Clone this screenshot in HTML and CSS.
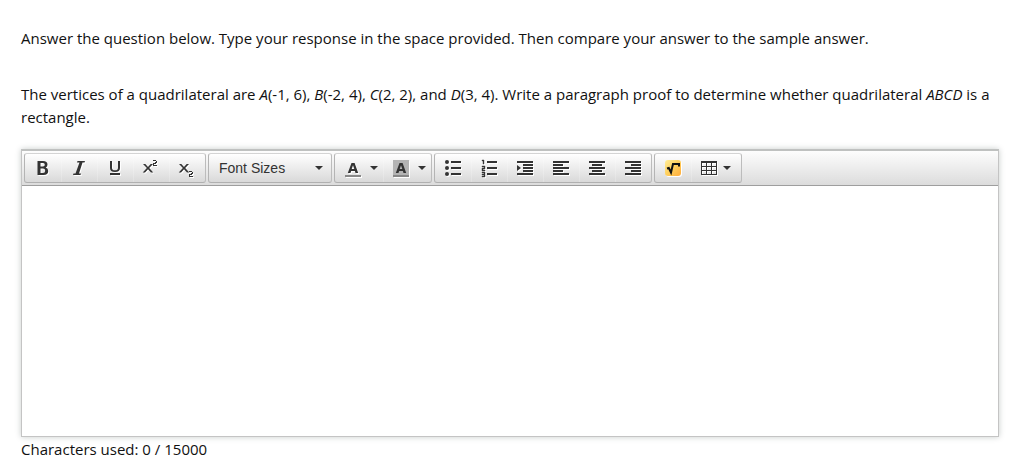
FILE: index.html
```html
<!DOCTYPE html>
<html lang="en">
<head>
<meta charset="utf-8">
<title>Paragraph proof</title>
<link rel="stylesheet" href="styles.css">
</head>
<body>
<main class="question">
  <p class="instructions">Answer the question below. Type your response in the space provided. Then compare your answer to the sample answer.</p>
  <p class="prompt" id="prompt">The vertices of a quadrilateral are <i>A</i>(-1, 6), <i>B</i>(-2, 4), <i>C</i>(2, 2), and <i>D</i>(3, 4). Write a paragraph proof to determine whether quadrilateral <i>ABCD</i> is a rectangle.</p>
  <div class="editor">
    <div class="toolbar" role="toolbar" aria-label="Formatting">
      <div class="group">
        <button class="tool" type="button" aria-label="Bold"><svg class="icon" viewBox="0 0 16 16"><path fill-rule="evenodd" d="M2.500 1H8q4.500 0 4.500 3.500Q12.500 6.800 10.700 7.500 13.200 8.300 13.200 11 13.200 15 8.500 15h-6zM5.500 3v3.600H8Q9.800 6.600 9.800 4.800 9.800 3 8 3zM5.500 8.600V13H8Q10.200 13 10.200 10.800 10.200 8.600 8 8.600z"/></svg></button>
        <button class="tool" type="button" aria-label="Italic"><svg class="icon" viewBox="0 0 16 16"><path d="M6.500 1H14l-.5 1.500h-2L8 13.500h2L9.500 15H2l.5-1.500h2L8.500 2.500H6z"/></svg></button>
        <button class="tool" type="button" aria-label="Underline"><svg class="icon" viewBox="0 0 16 16"><path d="M3 1h2v7q0 2.300 3 2.300T11 8V1h2v7q0 4-5 4T3 8zM3 13h10v2H3z"/></svg></button>
        <button class="tool" type="button" aria-label="Superscript"><svg class="icon" viewBox="0 0 16 16"><path d="M0 4h2.300L5 6.900 7.700 4H10L6.200 8.100 10.300 12.500H8L5 9.300l-3 3.200H-.3L3.900 8.100zM10 0h3v1h1v2h-1v1h-2v1h3v1h-4V3h2V2h1V1h-3z"/></svg></button>
        <button class="tool" type="button" aria-label="Subscript"><svg class="icon" viewBox="0 0 16 16"><path d="M0 4h2.300L5 6.900 7.700 4H10L6.200 8.100 10.300 12.500H8L5 9.300l-3 3.200H-.3L3.900 8.100zM10 11h3v1h1v2h-1v1h-2v1h3v1h-4v-3h2v-1h1v-1h-3z"/></svg></button>
      </div>
      <div class="group">
        <button class="tool sizes" type="button" aria-haspopup="listbox"><span>Font Sizes</span><span class="caret"></span></button>
      </div>
      <div class="group">
        <button class="tool colour" type="button" aria-label="Text color"><svg class="icon" viewBox="0 0 16 16"><path class="swatch" d="M0 15h16v2H0z"/><path fill-rule="evenodd" d="M6.500 3h3.100L13.200 13h-2.700L9.900 11H6.100L5.500 13H2.800zM6.700 9h2.600L8 5.200z"/></svg><span class="caret"></span></button>
        <button class="tool colour" type="button" aria-label="Background color"><svg class="icon" viewBox="0 0 16 16"><path class="fill" d="M0 0h16v16H0z"/><path class="swatch" d="M0 15h16v2H0z"/><path fill-rule="evenodd" d="M6.500 3h3.100L13.200 13h-2.700L9.900 11H6.100L5.500 13H2.800zM6.700 9h2.600L8 5.200z"/></svg><span class="caret"></span></button>
      </div>
      <div class="group">
        <button class="tool" type="button" aria-label="Bullet list"><svg class="icon" viewBox="0 0 16 16"><circle cx="2" cy="2" r="2"/><circle cx="2" cy="8" r="2"/><circle cx="2" cy="14" r="2"/><path d="M6 1h10v2H6zM6 7h10v2H6zM6 13h10v2H6z"/></svg></button>
        <button class="tool" type="button" aria-label="Numbered list"><svg class="icon" viewBox="0 0 16 16"><path d="M6 1h10v2H6zM6 7h10v2H6zM6 13h10v2H6z"/><path stroke="#333" stroke-width=".4" d="M2 0h1v4H2zM1 0h1v1H1zM1 6h3v3H2v1h2v1H1V8h2V7H1zM1 12h3v5H1v-1h2v-1H1v-1h2v-1H1z"/></svg></button>
        <button class="tool" type="button" aria-label="Increase indent"><svg class="icon" viewBox="0 0 16 16"><path d="M0 1h16v2H0zM6 4h10v2H6zM6 7h10v2H6zM6 10h10v2H6zM0 13h16v2H0zM0 5l4 3-4 3z"/></svg></button>
        <button class="tool" type="button" aria-label="Align left"><svg class="icon" viewBox="0 0 16 16"><path d="M0 1h16v2H0zM0 4h10v2H0zM0 7h16v2H0zM0 10h10v2H0zM0 13h16v2H0z"/></svg></button>
        <button class="tool" type="button" aria-label="Align center"><svg class="icon" viewBox="0 0 16 16"><path d="M0 1h16v2H0zM3 4h10v2H3zM0 7h16v2H0zM3 10h10v2H3zM0 13h16v2H0z"/></svg></button>
        <button class="tool" type="button" aria-label="Align right"><svg class="icon" viewBox="0 0 16 16"><path d="M0 1h16v2H0zM6 4h10v2H6zM0 7h16v2H0zM6 10h10v2H6zM0 13h16v2H0z"/></svg></button>
      </div>
      <div class="group">
        <button class="tool" type="button" aria-label="Math equation"><svg class="icon" viewBox="0 0 16 16"><defs><linearGradient id="amber" x1="0" y1="0" x2="1" y2="1"><stop offset="0" stop-color="#ffee9a"/><stop offset=".5" stop-color="#ffcf5c"/><stop offset="1" stop-color="#ffab3a"/></linearGradient></defs><rect width="16" height="16" rx="3" fill="url(#amber)"/><path d="M2 8.500 3.800 8 6 12.500 8 4h6v2.500" fill="none" stroke="#111" stroke-width="2"/></svg></button>
        <button class="tool table" type="button" aria-label="Table"><svg class="icon" viewBox="0 0 16 16"><path fill-rule="evenodd" d="M0 1h16v14H0zM1 3v3h4V3zM6 3v3h4V3zM11 3v3h4V3zM1 7v3h4V7zM6 7v3h4V7zM11 7v3h4V7zM1 11v3h4v-3zM6 11v3h4v-3zM11 11v3h4v-3z"/></svg><span class="caret"></span></button>
      </div>
    </div>
    <textarea class="response" aria-labelledby="prompt"></textarea>
  </div>
  <p class="count">Characters used: 0 / 15000</p>
</main>
</body>
</html>
```
FILE: styles.css
```css
* {
  box-sizing: border-box;
}

body {
  margin: 0;
  background: #fff;
  color: #111;
  font-family: "Open Sans", sans-serif;
  font-size: 15px;
  line-height: 23px;
}

.question {
  padding: 27px 24px 0 21px;
}

p {
  margin: 0;
}

.instructions {
  margin-bottom: 33px;
}

.prompt {
  margin-bottom: 20px;
}

.editor {
  border: 1px solid #c4c4c4;
  border-top: 2px solid #bfc1c0;
  box-shadow: 0 0 6px #c8cccb;
}

.toolbar {
  display: flex;
  flex-wrap: wrap;
  gap: 2px;
  padding: 2px;
  border-bottom: 1px solid #9e9e9e;
  background: linear-gradient(#fdfdfd, #dcdcdc);
}

.group {
  display: flex;
  border: 1px solid;
  border-color: #d4d4d4 #bcbcbc #b0b0b0 #b4b4b4;
  border-radius: 3px;
  background: linear-gradient(#fff, #d9d9d9);
}

.tool {
  display: flex;
  align-items: center;
  height: 28px;
  margin: 0;
  padding: 0 10px;
  border: 0;
  background: none;
  color: #333;
  font: 14px/20px "Liberation Sans", Arial, sans-serif;
}

.tool + .tool {
  box-shadow: inset 1px 0 rgba(255, 255, 255, 0.2);
}

.icon {
  display: block;
  flex: none;
  width: 16px;
  height: 16px;
  overflow: visible;
  fill: #333;
  filter: drop-shadow(1px 1px 0 #fff);
}

.swatch {
  fill: #888;
}

.fill {
  fill: #b4b4b4;
}

.caret {
  border: 4px solid transparent;
  border-top-color: #333;
  border-bottom: 0;
}

.sizes {
  justify-content: space-between;
  width: 122px;
  padding: 0 8px 0 10px;
}

.colour {
  gap: 9px;
  padding-right: 5px;
}

.table {
  gap: 6px;
}

.response {
  display: block;
  width: 100%;
  height: 250px;
  padding: 8px;
  border: 0;
  outline: 0;
  resize: none;
  background: #fff;
  color: inherit;
  font: inherit;
}

.count {
  padding-top: 1px;
}
```
